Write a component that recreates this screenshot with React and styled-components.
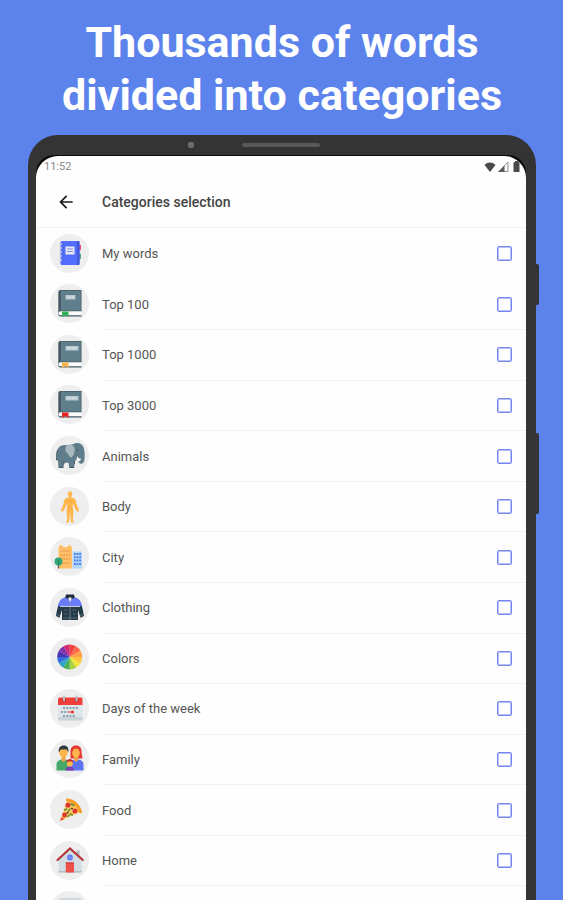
import React from "react";
import styled, { createGlobalStyle } from "styled-components";

const GlobalStyle = createGlobalStyle`
  * {
    box-sizing: border-box;
  }
  body {
    margin: 0;
    background-color: #5c83ec;
    font-family: Roboto, "Liberation Sans", sans-serif;
  }
`;

const PageStyled = styled.main`
  height: 100vh;
  overflow: hidden;
  padding: 16px 27px 0 28px;
`;

const HeadlineStyled = styled.h1`
  margin: 0 0 13px;
  color: #ffffff;
  font-size: 43px;
  font-weight: 700;
  line-height: 53px;
  text-align: center;
`;

const PhoneStyled = styled.div`
  position: relative;
  padding: 0 10px 10px 8px;
  border-radius: 30px 30px 0 0;
  background-color: #343434;
`;

const SideButtonStyled = styled.span`
  position: absolute;
  right: -3px;
  top: ${(props) => props.$top}px;
  width: 4px;
  height: ${(props) => props.$height}px;
  border-radius: 0 2px 2px 0;
  background-color: #343434;
`;

const BezelStyled = styled.div`
  display: grid;
  grid-template-columns: 1fr auto 1fr;
  align-items: center;
  gap: 48px;
  height: 20px;
`;

const CameraStyled = styled.span`
  justify-self: end;
  width: 6px;
  height: 6px;
  border-radius: 2px;
  background-color: #6d6d6d;
`;

const SpeakerStyled = styled.span`
  width: 78px;
  height: 4px;
  border-radius: 2px;
  background-color: #58585a;
`;

const ScreenShellStyled = styled.div`
  padding-top: 1px;
  border-radius: 18px 18px 0 0;
  background-color: #0c0c0c;
`;

const ScreenStyled = styled.div`
  overflow: hidden;
  border-radius: 22px 22px 0 0;
  background-color: #fefefe;
`;

const StatusBarStyled = styled.div`
  display: flex;
  align-items: center;
  justify-content: space-between;
  height: 21px;
  padding: 0 4px 0 8px;
  color: #8a8a8a;
  font-size: 11px;
`;

const StatusIconsStyled = styled.div`
  display: flex;
  align-items: center;
  gap: 2px;
`;

const HeaderStyled = styled.header`
  display: flex;
  align-items: center;
  gap: 26px;
  height: 51px;
  padding: 0 20px;
  border-bottom: 1px solid #f3f3f3;
`;

const BackButtonStyled = styled.button`
  display: flex;
  padding: 0;
  border: 0;
  background: none;
  cursor: pointer;
`;

const TitleStyled = styled.h2`
  margin: 0;
  color: #444444;
  font-size: 14px;
  font-weight: 500;
`;

const ListStyled = styled.ul`
  display: grid;
  grid-auto-rows: 1fr;
  min-height: 708px;
  margin: 0;
  padding: 0;
  list-style: none;
`;

const RowStyled = styled.li`
  display: flex;
  padding-left: 14px;
`;

const RowLabelStyled = styled.label`
  flex: 1;
  display: flex;
  align-items: center;
  gap: 13px;
  cursor: pointer;
`;

const RowBodyStyled = styled.span`
  flex: 1;
  align-self: stretch;
  display: flex;
  align-items: center;
  justify-content: space-between;
  padding-right: 14px;
  border-top: 1px solid ${(props) => (props.$line ? "#f2f2f2" : "transparent")};
  color: #555555;
  font-size: 13px;
`;

const IconStyled = styled.svg`
  display: block;
  width: 39px;
  height: 39px;
  border-radius: 50%;
  background-color: #eeeeee;
`;

const CheckboxStyled = styled.input`
  appearance: none;
  width: 15px;
  height: 15px;
  margin: 0;
  border: 1px solid #7585ef;
  border-radius: 2px;
  box-shadow: inset 0 0 0 1px #b9c2f8;
  cursor: pointer;

  &:checked {
    background-color: #7585ef;
  }
`;

const NotebookIcon = () => (
  <>
    <path d="M28 11h3v5h-3z" fill="#f0506e" />
    <path d="M28 16h3v4h-3z" fill="#dfe3ea" />
    <path d="M28 20h3v5h-3z" fill="#4caf7a" />
    <rect x="10.500" y="7" width="19" height="24" rx="1.500" fill="#536dfe" />
    <path d="M27 7h1.500a1 1 0 0 1 1 1v22a1 1 0 0 1-1 1H27z" fill="#3f57d8" />
    <rect x="15.500" y="12.500" width="9" height="8" fill="#e8eaf6" />
    <path d="M17 15h6M17 17.500h6" stroke="#7d8be0" />
    <path
      d="M9.500 10h3M9.500 14h3M9.500 18h3M9.500 22h3M9.500 26h3"
      stroke="#c4cae8"
      strokeWidth="1.300"
    />
    <path d="M12 10h1.500M12 14h1.500M12 18h1.500M12 22h1.500M12 26h1.500" stroke="#3546b0" />
  </>
);

const BookIcon = ({ ribbon, digits }) => (
  <>
    <path d="M10.500 6H31.500v22H12v3h19.500v1.500H10.500a2.200 2.200 0 0 1-2.200-2.200V8.200A2.200 2.200 0 0 1 10.500 6z" fill="#455a64" />
    <path d="M11 6.800H30.800V26.500H11z" fill="#607f8c" />
    <path d="M10.500 27.300H31.500v3.900H10.500a1.900 1.900 0 0 1 0-3.900z" fill="#fafafa" />
    <rect x="15.500" y="11" width={digits} height="4.500" fill="#b8c8ce" />
    <path d={`M17 13.200h${digits - 3}`} stroke="#dbe5e8" strokeWidth="2" strokeDasharray="1.500 1" />
    <path d="M12 27.500h6.500v5.500l-3.200-2-3.300 2z" fill={ribbon} />
  </>
);

const ElephantIcon = () => (
  <>
    <path
      d="M15 9C9 9 6.800 13 6.800 18l-.3 6 1.500 1 .5 7h5l.7-5.500 4.500.5.500 5h5l.8-7c1.500-1 2-2.500 2-4 1.500 1.500.8 5 2.500 6.200 2 1.300 4.500 0 4.900-3 .5-4 .3-8-.2-10.700-.8-4-3-6.500-7-6.500-1.500 0-2.500.3-3.500 1C21 9 18 9 15 9z"
      fill="#607d8b"
    />
    <path d="M17 9c3-1.500 7 0 7.500 3 .6 4-1 8.500-3.500 9.500-2-.5-2.500-3.500-4.500-5-1.500-2-1.500-6 .5-7.500z" fill="#a9b7be" />
    <path d="M27.500 20c.5 2 2 2.800 3.500 2.500-.2 2.500-2.500 3.500-3.500 2-.8-1.200-.6-3 0-4.500z" fill="#f8f8f8" />
    <path d="M7.500 14c-1 3-.7 7-1 10M9 31.500h4M20 31.500h4M14 25v3M24.500 25v3" stroke="#455a64" fill="none" />
    <circle cx="27.500" cy="14" r="0.800" fill="#37474f" />
  </>
);

const BodyIcon = () => (
  <>
    <ellipse cx="20" cy="7" rx="2.200" ry="2.700" fill="#ffb74d" />
    <path
      d="M18.800 9h2.400v1.500c2.300.4 4.300 1 4.600 3l1 4.500 2.200 5-.8 2-1.600-1-2.600-5-1-2.500-.3 3 .8 4-.4 5-.3 4.500 1.400 2.500h-3.200l-.7-7-.3-4-.3 4-.7 7h-3.200l1.400-2.500-.3-4.500-.4-5 .8-4-.3-3-1 2.500-2.600 5-1.600 1-.8-2 2.200-5 1-4.500c.3-2 2.300-2.600 4.600-3z"
      fill="#ffb74d"
    />
    <path d="M17 13.500c1.500.8 2.300.8 3 0 .7.800 1.500.8 3 0M18.500 19.500h3" stroke="#f2a03c" strokeWidth="0.700" fill="none" />
  </>
);

const CityIcon = () => (
  <>
    <path d="M8.500 10l2.500-2.500 2.500 2.500h3.500l2.500-2.500 2.500 2.500v21.500H8.500z" fill="#ffc069" />
    <path
      d="M10.500 14h9.500M10.500 18h9.500M10.500 22h9.500M10.500 26h9.500"
      stroke="#ee9950"
      strokeWidth="1.600"
      strokeDasharray="1.800 1"
    />
    <path d="M22.500 14.500H32v17h-9.500z" fill="#b3d4fb" />
    <path
      d="M24 17h7M24 20.300h7M24 23.600h7M24 27h7"
      stroke="#4a84e8"
      strokeWidth="2"
      strokeDasharray="1.800 0.800"
    />
    <path d="M7.800 25h1.400v6.500H7.800z" fill="#795548" />
    <circle cx="8.500" cy="24.500" r="4" fill="#34a77a" />
    <path d="M8.500 23v5M8.500 26l2-1.500" stroke="#1f7d58" strokeWidth="0.700" />
  </>
);

const JacketIcon = () => (
  <>
    <path d="M12 11l5-2.500h6l5 2.500c3 2 4.500 8 6 17l-3.500 1.800-2.500-8V32H12V21.800l-2.500 8L6 28c1.500-9 3-15 6-17z" fill="#263b49" />
    <path d="M12 11l5-2.500 3 3 3-3 5 2.500c2.300 1.400 3.500 4.500 4 7H8c.5-2.500 1.700-5.600 4-7z" fill="#6b7cfb" />
    <path d="M10 18.500h20" stroke="#d9def5" strokeWidth="0.900" />
    <path d="M16 6.500h8l.7 3L20 12l-4.700-2.500z" fill="#1b2b38" />
    <path d="M18.500 9.500h3V11L20 14l-1.500-3z" fill="#f3f3f3" />
    <path d="M20 13v19" stroke="#8d9cab" strokeWidth="0.700" />
    <path d="M14 22h3.500M22.500 22H26M13 30h14M14 26h3M23 26h3M7 26.500l3 1.200M33 26.500l-3 1.200" stroke="#5f7683" strokeWidth="0.800" />
  </>
);

const wheelColors = [
  "#f4433c",
  "#fb6a4d",
  "#ffa04a",
  "#ffc33d",
  "#f2e43a",
  "#a5d43f",
  "#4caf50",
  "#2fa5c9",
  "#3569df",
  "#4a35b0",
  "#8330ac",
  "#d02a75",
];

const wheelPoint = (step) => {
  const angle = (step * Math.PI) / 6 - Math.PI / 2;
  return `${19.7 + 12.5 * Math.cos(angle)} ${19 + 12.5 * Math.sin(angle)}`;
};

const ColorWheelIcon = () =>
  wheelColors.map((color, i) => (
    <path key={color} d={`M19.700 19L${wheelPoint(i)}A12.500 12.500 0 0 1 ${wheelPoint(i + 1)}z`} fill={color} />
  ));

const CalendarIcon = () => (
  <>
    <path d="M8 14h24.500v16a1.500 1.500 0 0 1-1.500 1.500H9.500A1.500 1.500 0 0 1 8 30z" fill="#dde6ea" />
    <path d="M8 28h24.500v2a1.500 1.500 0 0 1-1.500 1.500H9.500A1.500 1.500 0 0 1 8 30z" fill="#c9d4d9" />
    <path d="M9.500 8.500H31a1.500 1.500 0 0 1 1.500 1.500V16H8v-6A1.500 1.500 0 0 1 9.500 8.500z" fill="#ee3f3b" />
    <circle cx="14" cy="11" r="2" fill="#c62828" />
    <circle cx="26.500" cy="11" r="2" fill="#c62828" />
    <path d="M14 7.500v4M26.500 7.500v4" stroke="#b5c2c8" strokeWidth="2" strokeLinecap="round" />
    <path d="M13 19h15M11 23h11M13 27h13" stroke="#8fa0a9" strokeWidth="2" strokeDasharray="2 1.200" />
    <path d="M18 23h3" stroke="#ef8a85" strokeWidth="2" />
    <circle cx="22.500" cy="23" r="1.600" fill="#e53935" />
  </>
);

const FamilyIcon = () => (
  <>
    <path d="M6.500 31.500v-6c0-3.500 3-5 7-5s7 1.500 7 5v6z" fill="#43a868" />
    <path d="M19.500 31.500v-6c0-3.500 3-5 7-5s7 1.500 7 5v6z" fill="#5c74f2" />
    <path d="M20.500 17V12c0-3.500 2.500-5.500 5.500-5.500s5.500 2 5.500 5.500c0 3 1 5.500 1 7.500h-12z" fill="#e53935" />
    <path d="M11.500 16.500h4v5l-2 1.500-2-1.500zM24 16.500h4v5L26 23l-2-1.500z" fill="#f5a34a" />
    <ellipse cx="13.500" cy="13.500" rx="4.200" ry="5" fill="#ffb74d" />
    <ellipse cx="26" cy="14" rx="3.800" ry="4.700" fill="#ffb74d" />
    <path d="M8.800 13.500c-.6-4.500 1.500-7 5-7s5.200 2.500 4.500 7l-1.500-3h-6z" fill="#303b42" />
    <path d="M22 13c.3-2.500 1.500-3.500 4-3.500s3.700 1 4 3.500c1.500-3-.5-6-4-6s-5.500 3-4 6z" fill="#e53935" />
    <path d="M15.500 31.500c0-3 1.500-4 4.300-4s4.300 1 4.300 4z" fill="#7b3fb5" />
    <circle cx="19.800" cy="24.500" r="3.100" fill="#ffb74d" />
    <path d="M16.500 24c0-3 1.200-4 3.300-4s3.300 1 3.300 4l-1.500-1.500h-3.600z" fill="#c4342f" />
  </>
);

const PizzaIcon = () => (
  <>
    <path d="M17.500 9.500L10 31l20.500-9C28 15.500 23.500 11 17.500 9.500z" fill="#ffc85a" />
    <path d="M16.500 8.500C24 8.500 30.500 14.500 32 22c0 1.500-2 1.800-2.800.6C27.500 17 23.500 12.500 17 11.300c-1.300-.5-1.500-2.300-.5-2.800z" fill="#f59a23" />
    <circle cx="18" cy="15" r="2.600" fill="#d93636" />
    <circle cx="25" cy="21" r="2.500" fill="#d93636" />
    <circle cx="14.500" cy="25" r="2.400" fill="#d93636" />
    <path d="M10 31l1.500-4 3 2z" fill="#e34b36" />
    <path d="M21 14l3 1.500M20 19l-2 2.500M14.500 20l2-1M20 24l2.500 1M17.500 26.500l1.500-1" stroke="#5c8a3a" strokeWidth="1.400" strokeLinecap="round" />
    <path d="M21.500 18.500h1M17 23h1" stroke="#5a3b2a" strokeWidth="1.300" strokeLinecap="round" />
  </>
);

const HouseIcon = () => (
  <>
    <path d="M26.500 9.500h3v8h-3z" fill="#b0b8bd" />
    <path d="M8.500 19L20 8l11.500 11v12.500h-23z" fill="#d3dce1" />
    <path d="M8.500 30h23v1.500h-23z" fill="#b0bec5" />
    <path d="M7.500 19L20 7.500 32.800 19" fill="none" stroke="#b3373b" strokeWidth="2.200" strokeLinecap="round" />
    <circle cx="20" cy="16.500" r="2.900" fill="#5c74f5" />
    <path d="M20 14v5M17.500 16.500h5" stroke="#a4b2fb" strokeWidth="0.500" />
    <path d="M15.800 21.500h8.200v10h-8.200z" fill="#ef4f4b" />
    <path d="M15.800 22H24" stroke="#c9393a" />
  </>
);

const categories = [
  { name: "My words", icon: <NotebookIcon /> },
  { name: "Top 100", icon: <BookIcon ribbon="#31b357" digits={10} /> },
  { name: "Top 1000", icon: <BookIcon ribbon="#f9b44a" digits={13} />, line: true },
  { name: "Top 3000", icon: <BookIcon ribbon="#e52525" digits={13} />, line: true },
  { name: "Animals", icon: <ElephantIcon />, line: true },
  { name: "Body", icon: <BodyIcon />, line: true },
  { name: "City", icon: <CityIcon />, line: true },
  { name: "Clothing", icon: <JacketIcon />, line: true },
  { name: "Colors", icon: <ColorWheelIcon />, line: true },
  { name: "Days of the week", icon: <CalendarIcon />, line: true },
  { name: "Family", icon: <FamilyIcon />, line: true },
  { name: "Food", icon: <PizzaIcon />, line: true },
  { name: "Home", icon: <HouseIcon />, line: true },
];

const CategoryIcon = ({ children }) => (
  <IconStyled viewBox="0 0 39 39" aria-hidden="true">
    {children}
  </IconStyled>
);

const CategoryRow = ({ name, icon, line }) => (
  <RowStyled>
    <RowLabelStyled>
      <CategoryIcon>{icon}</CategoryIcon>
      <RowBodyStyled $line={line}>
        {name}
        <CheckboxStyled type="checkbox" />
      </RowBodyStyled>
    </RowLabelStyled>
  </RowStyled>
);

const StatusBar = () => (
  <StatusBarStyled>
    <span>11:52</span>
    <StatusIconsStyled>
      <svg width="12" height="10" viewBox="0 0 12 10" aria-hidden="true">
        <path d="M6 10L.5 3C3.500-.3 8.500-.3 11.500 3z" fill="#4a4a4a" />
      </svg>
      <svg width="11" height="11" viewBox="0 0 11 11" aria-hidden="true">
        <path d="M1 10.500h9V1z" fill="none" stroke="#8c8c8c" />
        <path d="M0 11h6.500V4.500z" fill="#5a5a5a" />
      </svg>
      <svg width="11" height="11" viewBox="0 0 11 11" aria-hidden="true">
        <path d="M4 0h3v1.200h1.500V11h-6V1.200H4z" fill="#4a4a4a" />
      </svg>
    </StatusIconsStyled>
  </StatusBarStyled>
);

const App = () => {
  return (
    <PageStyled>
      <GlobalStyle />
      <HeadlineStyled>
        Thousands of words
        <br />
        divided into categories
      </HeadlineStyled>
      <PhoneStyled>
        <SideButtonStyled $top={129} $height={41} />
        <SideButtonStyled $top={298} $height={81} />
        <BezelStyled>
          <CameraStyled />
          <SpeakerStyled />
        </BezelStyled>
        <ScreenShellStyled>
          <ScreenStyled>
            <StatusBar />
            <HeaderStyled>
              <BackButtonStyled type="button" aria-label="Back">
                <svg width="20" height="20" viewBox="0 0 24 24" aria-hidden="true">
                  <path d="M20 11H7.830l5.590-5.590L12 4l-8 8 8 8 1.410-1.410L7.830 13H20z" fill="#1c1c1c" />
                </svg>
              </BackButtonStyled>
              <TitleStyled>Categories selection</TitleStyled>
            </HeaderStyled>
            <ListStyled>
              {categories.map((category) => (
                <CategoryRow key={category.name} {...category} />
              ))}
              <RowStyled>
                <RowLabelStyled as="div">
                  <CategoryIcon>
                    <path d="M9 7h22v24H9z" fill="#cfd8dc" />
                  </CategoryIcon>
                  <RowBodyStyled $line />
                </RowLabelStyled>
              </RowStyled>
            </ListStyled>
          </ScreenStyled>
        </ScreenShellStyled>
      </PhoneStyled>
    </PageStyled>
  );
};

export default App;
